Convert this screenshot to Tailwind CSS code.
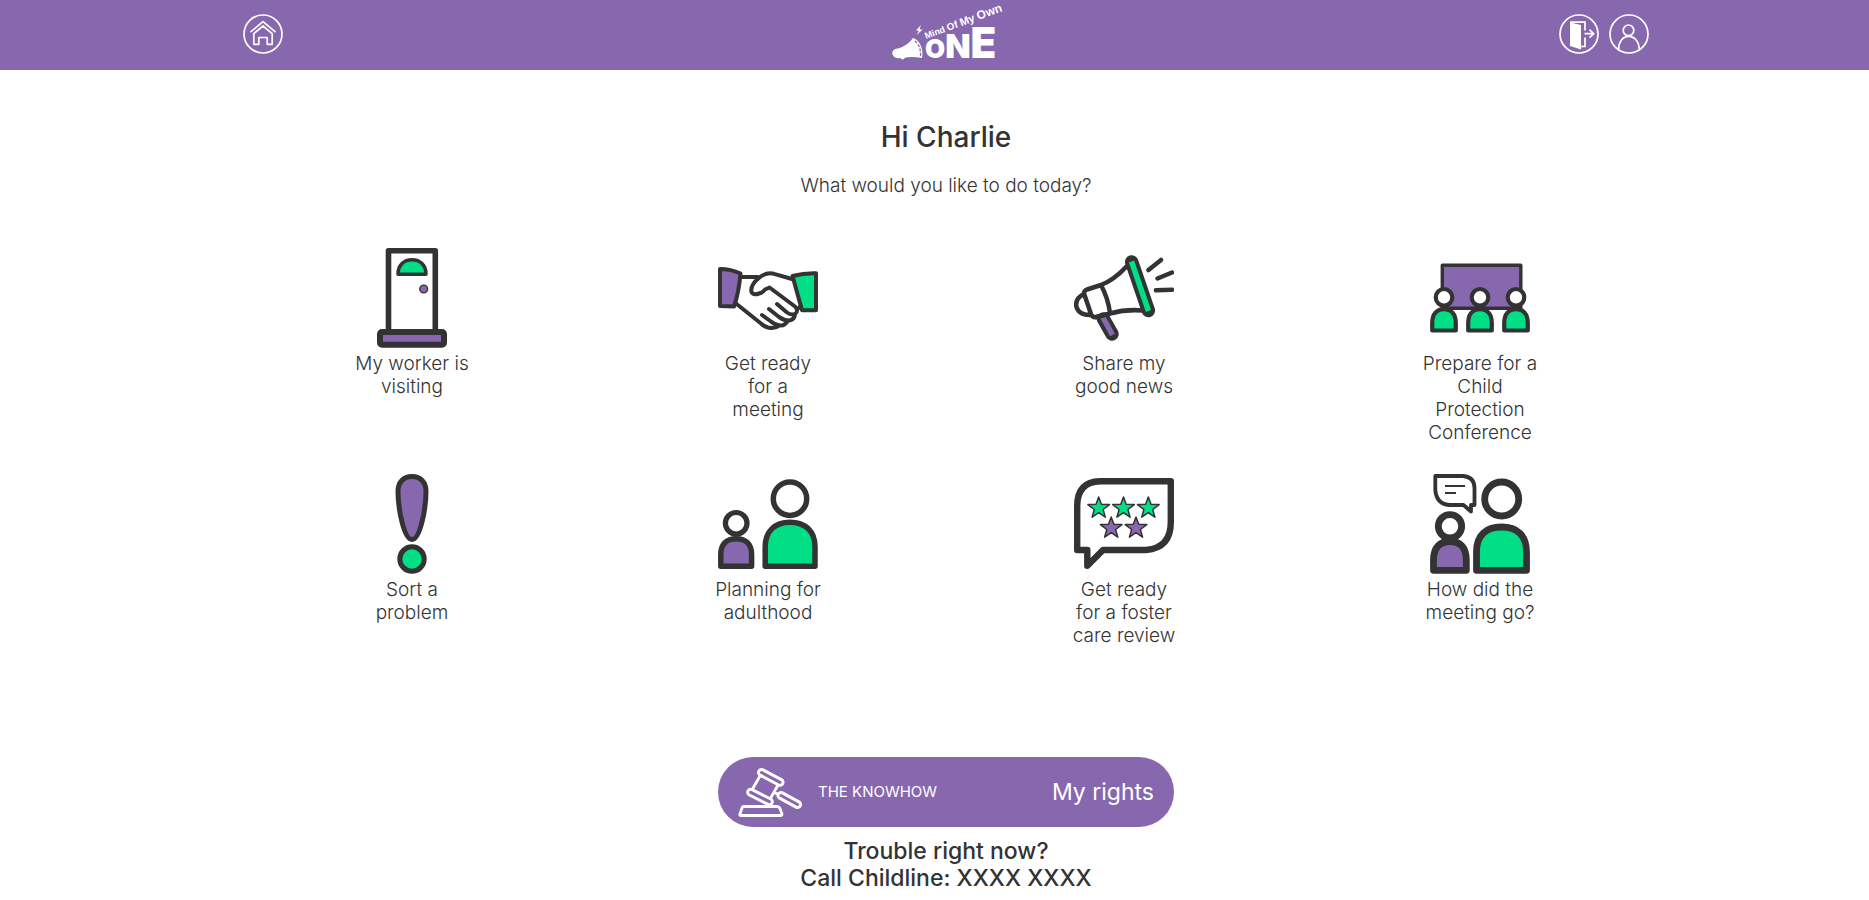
<!DOCTYPE html>
<html lang="en">
<head>
<meta charset="utf-8">
<meta name="viewport" content="width=device-width, initial-scale=1">
<title>Mind Of My Own ONE</title>
<script src="https://cdn.jsdelivr.net/npm/@tailwindcss/browser@4"></script>
</head>
<body class="bg-white text-[#333] font-['Inter',sans-serif]">
<header class="bg-[#8768ae] pl-[23px]">
  <div class="mx-auto grid h-[70px] max-w-[1424px] grid-cols-3 items-center px-[9px] pb-0.5">
    <a href="#" aria-label="Home" class="justify-self-start">
      <svg class="size-10" viewBox="0 0 40 40" fill="none" stroke="#fff" stroke-width="1.7" stroke-linejoin="round" stroke-linecap="round">
        <circle cx="20" cy="20" r="19"/>
        <path d="M8 17.7 20 7.6 32 17.7"/>
        <path d="M10.8 30.3V19.6L20 12l9.2 7.6v10.7h-5v-6.8h-8.4v6.8z"/>
      </svg>
    </a>
    <a href="#" aria-label="Mind Of My Own ONE" class="justify-self-center">
      <svg class="h-[58px] w-[112px] overflow-visible" viewBox="-2 -2 112 58" fill="#fff">
        <path d="M1 44q1-2.500 5-2.500 10-3 15-10.500c7 2 11 12 9 20q-10-2-17.500-.3c.5 2-3.500 2.500-4 .3-4 .500-6.500-.5-7.500-2.500s-1-3.500 0-4.500z"/>
        <path d="M23 34c4 3 6 9 5.500 15" fill="none" stroke="#8768ae" stroke-width="1.300" stroke-dasharray="3 1.500"/>
        <path d="M29 18l-5 5.500 3 .3-2.500 4.200 6-5.300-3-.4z"/>
        <g font-family="'Liberation Sans',sans-serif" font-weight="700" transform="translate(34 32) rotate(-20)">
          <text><tspan font-size="9">Mind </tspan><tspan font-size="10">Of </tspan><tspan font-size="11">My </tspan><tspan font-size="12">Own</tspan></text>
        </g>
        <text x="33" y="51" font-family="Inter,sans-serif" font-weight="900"><tspan font-size="26">O</tspan><tspan font-size="33">N</tspan><tspan font-size="42">E</tspan></text>
      </svg>
    </a>
    <nav class="flex gap-[10px] justify-self-end" aria-label="Account">
      <a href="#" aria-label="Log out">
        <svg class="size-10" viewBox="0 0 40 40" fill="none" stroke="#fff" stroke-width="1.7">
          <circle cx="20" cy="20" r="19"/>
          <path d="M11 8.500 22 11v24.500L11 32z" fill="#fff" stroke="none"/>
          <path d="M11 8.200H26V16.500M26 23.500V32.500H22M25.500 19.700H34.500M30.500 15.700l4.200 4-4.200 4"/>
        </svg>
      </a>
      <a href="#" aria-label="My account">
        <svg class="size-10" viewBox="0 0 40 40" fill="none" stroke="#fff" stroke-width="1.7">
          <circle cx="20" cy="20" r="19"/>
          <circle cx="19.500" cy="16.300" r="5.300"/>
          <path d="M9.500 36C9.500 28 13.500 22.300 19.700 22.300S30.300 28 30.300 36"/>
        </svg>
      </a>
    </nav>
  </div>
</header>

<main class="flex flex-col items-center pt-[49px] pl-[23px]">
  <h1 class="text-[28px] leading-9 font-medium">Hi Charlie</h1>
  <p class="mt-[19px] text-[19px] leading-[23px] font-light">What would you like to do today?</p>

  <div class="mt-[51px] grid w-full max-w-[1424px] grid-cols-4 justify-items-center gap-y-[30px] text-[19px] leading-[23px] font-light">
    <a href="#" class="flex w-[122px] flex-col items-center gap-1 text-center">
      <svg class="size-[100px]" viewBox="0 0 100 100" stroke="#333" stroke-linejoin="round">
        <path d="M26.500 84V2.800H73.300V84" fill="#fff" stroke-width="5.600"/>
        <rect x="18" y="84" width="64" height="12.700" rx="2" fill="#8768ae" stroke-width="6"/>
        <path d="M36 26.300C36 17 42 11.700 50 11.700S64 17 64 26.300z" fill="#00df85" stroke-width="3.500"/>
        <circle cx="61.700" cy="41" r="3.900" fill="#8768ae" stroke-width="1.400"/>
      </svg>
      <span>My worker is visiting</span>
    </a>
    <a href="#" class="flex w-[122px] flex-col items-center gap-1 text-center">
      <svg class="size-[100px]" viewBox="0 0 100 100" fill="none" stroke="#333" stroke-width="4" stroke-linejoin="round" stroke-linecap="round">
        <path d="M2 21Q13 21 22.500 25.500 21 44 16 58.500L2 58z" fill="#8768ae"/>
        <path d="M74.500 28Q86 25 98 25.300V62.300H84Z" fill="#00df85"/>
        <path d="M24 29H40M74 31 56 25.800Q48 24 41.500 29.500 32 37 33.500 44 35 47.500 41 45.500 45 44.500 47 41.500L51.500 39.500 77 58.500Q81 63 77 66 73 67.500 69 64.500L59 56"/>
        <path d="M77 66Q76.500 72 71 72.500 66 72.500 61 69L51 61M70 72.500Q67 78 62 77.500 57 77 53 73.500L44 67M61.500 77.500Q57 81 50 79.500 46 78.500 43 75.500L18 55.500M83 58l-3.500 3"/>
      </svg>
      <span>Get ready<br>for a<br>meeting</span>
    </a>
    <a href="#" class="flex w-[122px] flex-col items-center gap-1 text-center">
      <svg class="size-[100px]" viewBox="0 0 100 100" fill="none" stroke="#333" stroke-width="4.500" stroke-linejoin="round" stroke-linecap="round">
        <path d="M52 19Q40 32 27 37L13 41.500Q9 43 10.500 47L17 66Q18.500 70 23 69L36 65.500Q52 61 69 62.500M27 37Q34 50 36 65M10 46Q1.500 50 2.200 58 4.500 67.500 17 67"/>
        <path d="M57.700 14 74.300 62.500" stroke-width="13.500"/>
        <path d="M57.500 13.500 74.500 63" stroke="#00df85" stroke-width="5.500" stroke-linecap="butt"/>
        <path d="M29.500 71 38 86" stroke-width="13.500"/>
        <path d="M29 69.500 38.500 87" stroke="#8768ae" stroke-width="5.500" stroke-linecap="butt"/>
        <path d="M22 69 35 66"/>
        <path d="M74.500 22 87 12M83.500 30.500 98 24.500M82 42.300 98 41.700"/>
      </svg>
      <span>Share my<br>good news</span>
    </a>
    <a href="#" class="flex w-[122px] flex-col items-center gap-1 text-center">
      <svg class="size-[100px]" viewBox="0 0 100 100" fill="#fff" stroke="#333" stroke-width="4.200" stroke-linejoin="round">
        <rect x="12.300" y="17.300" width="78.500" height="43" fill="#8768ae" stroke-width="3.400"/>
        <circle cx="14" cy="49.300" r="8.300"/><circle cx="50" cy="49.300" r="8.300"/><circle cx="86" cy="49.300" r="8.300"/>
        <g fill="#00df85">
          <path d="M2.200 82.500V75C2.200 66 7 61.200 14 61.200S25.800 66 25.800 75v7.500z"/>
          <path d="M38.200 82.500V75C38.200 66 43 61.200 50 61.200S61.800 66 61.800 75v7.500z"/>
          <path d="M74.200 82.500V75C74.200 66 79 61.200 86 61.200S97.800 66 97.800 75v7.500z"/>
        </g>
      </svg>
      <span>Prepare for a<br>Child<br>Protection<br>Conference</span>
    </a>
    <a href="#" class="flex w-[122px] flex-col items-center gap-1 text-center">
      <svg class="size-[100px]" viewBox="0 0 100 100" stroke="#333" stroke-width="5">
        <path d="M50 2.500C41 2.500 36 9 36 17 36 35 42 65.500 50 65.500S64 35 64 17C64 9 59 2.500 50 2.500z" fill="#8768ae"/>
        <circle cx="50" cy="85" r="12.200" fill="#00df85"/>
      </svg>
      <span>Sort a<br>problem</span>
    </a>
    <a href="#" class="flex w-[122px] flex-col items-center gap-1 text-center">
      <svg class="size-[100px]" viewBox="0 0 100 100" fill="#fff" stroke="#333" stroke-width="5.500" stroke-linejoin="round">
        <circle cx="72" cy="24.700" r="16.700"/>
        <path d="M47.200 92.200V73C47.200 57 57 48.200 72 48.200S97 57 97 73V92.200z" fill="#00df85"/>
        <circle cx="18.200" cy="49.300" r="10.800" stroke-width="5.200"/>
        <path d="M2.800 92.200V80C2.800 70 8.500 64.700 18.200 64.700S33.600 70 33.600 80V92.200z" fill="#8768ae"/>
      </svg>
      <span>Planning for adulthood</span>
    </a>
    <a href="#" class="flex w-[122px] flex-col items-center gap-1 text-center">
      <svg class="size-[100px]" viewBox="0 0 100 100" fill="#fff" stroke="#333" stroke-width="6.400" stroke-linejoin="round">
        <defs><path id="star" d="M0-11 2.700-3.700 10.800-3.400 4.400 1.500 6.600 9.200 0 4.700-6.600 9.200-4.400 1.500-10.800-3.400-2.700-3.700z"/></defs>
        <path d="M96.800 7.300H26Q3.200 8 3.200 32V76H13.300V91.800L29 76H72Q96.800 74 96.800 48z"/>
        <g fill="#00df85" stroke-width="1.500"><use href="#star" x="24.700" y="34"/><use href="#star" x="49.500" y="34"/><use href="#star" x="74.300" y="34"/></g>
        <g fill="#8768ae" stroke-width="1.500"><use href="#star" x="37.200" y="54"/><use href="#star" x="62" y="54"/></g>
      </svg>
      <span>Get ready<br>for a foster<br>care review</span>
    </a>
    <a href="#" class="flex w-[122px] flex-col items-center gap-1 text-center">
      <svg class="size-[100px]" viewBox="0 0 100 100" fill="#fff" stroke="#333" stroke-width="6.800" stroke-linejoin="round">
        <circle cx="71.700" cy="25" r="17"/>
        <path d="M46.500 96.300V78C46.500 61 56 53 71.500 53S96.500 61 96.500 78V96.300z" fill="#00df85"/>
        <circle cx="20" cy="52.300" r="11.700"/>
        <path d="M3.500 96.300V86C3.500 73 10 67.500 20 67.500S36.300 73 36.300 86V96.300z" fill="#8768ae"/>
        <path d="M5.300 2H33Q44.500 3 44.500 14V31H41V37.500L33.500 31H19Q6.500 30 5.300 16z" stroke-width="3.800"/>
        <path d="M15 12H35M15 19H26" stroke-width="2"/>
      </svg>
      <span>How did the<br>meeting go?</span>
    </a>
  </div>

  <a href="#" class="mt-[110px] flex h-[70px] w-full max-w-[456px] items-center rounded-full bg-[#8768ae] px-5 text-white">
    <svg class="h-[50px] w-16" viewBox="0 0 64 50" fill="none" stroke="#fff" stroke-width="2.800" stroke-linejoin="round" stroke-linecap="round">
      <path d="M22 9 14.500 22M40 18 32.700 31M36 25.500 42 28"/>
      <g stroke-width="9"><path d="M23.500 5.500 42 15.300M12.700 25.300 31.300 34.700M43 28.500 59.500 37.500"/></g>
      <g stroke-width="3" stroke="#8768ae"><path d="M23.500 5.500 42 15.300M12.700 25.300 31.300 34.700M43 28.500 59.500 37.500"/></g>
      <path d="M6 39.500H39Q41 39.500 42 41.500L44 47Q44 48.500 42.500 48.500H2.500Q1.500 48.500 2 47L4 41Q4.500 39.500 6 39.500z"/>
    </svg>
    <span class="ml-4 text-[15px]">THE KNOWHOW</span>
    <span class="ml-auto text-[23px]">My rights</span>
  </a>
  <p class="mt-[11px] text-center text-[23px] leading-[27px] font-medium">Trouble right now?<br>Call Childline: XXXX XXXX</p>
</main>
</body>
</html>
